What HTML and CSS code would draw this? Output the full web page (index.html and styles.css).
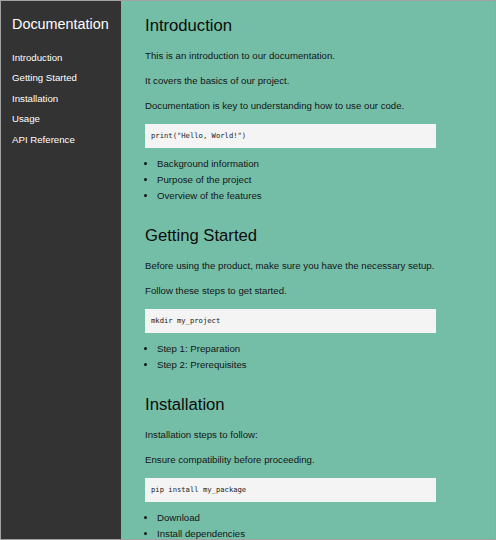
FILE: index.html
```html
<!DOCTYPE html>
<html lang="en">
<head>
<meta charset="utf-8">
<title>Documentation</title>
<link rel="stylesheet" href="styles.css">
</head>
<body>
<div class="frame">
  <aside class="sidebar">
    <h1 class="brand">Documentation</h1>
    <ul class="nav">
      <li><a href="#introduction">Introduction</a></li>
      <li><a href="#getting-started">Getting Started</a></li>
      <li><a href="#installation">Installation</a></li>
      <li><a href="#usage">Usage</a></li>
      <li><a href="#api">API Reference</a></li>
    </ul>
  </aside>
  <main class="content">
    <section class="section" id="introduction">
      <h2>Introduction</h2>
      <p>This is an introduction to our documentation.</p>
      <p>It covers the basics of our project.</p>
      <p>Documentation is key to understanding how to use our code.</p>
      <pre class="code">print("Hello, World!")</pre>
      <ul class="list">
        <li>Background information</li>
        <li>Purpose of the project</li>
        <li>Overview of the features</li>
      </ul>
    </section>
    <section class="section" id="getting-started">
      <h2>Getting Started</h2>
      <p>Before using the product, make sure you have the necessary setup.</p>
      <p>Follow these steps to get started.</p>
      <pre class="code">mkdir my_project</pre>
      <ul class="list">
        <li>Step 1: Preparation</li>
        <li>Step 2: Prerequisites</li>
      </ul>
    </section>
    <section class="section" id="installation">
      <h2>Installation</h2>
      <p>Installation steps to follow:</p>
      <p>Ensure compatibility before proceeding.</p>
      <pre class="code">pip install my_package</pre>
      <ul class="list">
        <li>Download</li>
        <li>Install dependencies</li>
      </ul>
    </section>
  </main>
</div>
</body>
</html>
```

FILE: styles.css
```css
* { box-sizing: border-box; }

html, body {
  margin: 0;
  padding: 0;
  height: 100%;
}

body {
  font-family: "Liberation Sans", Arial, sans-serif;
  overflow: hidden;
}

.frame {
  display: flex;
  height: 540px;
  border: 1px solid #a2a2a2;
  overflow: hidden;
}

.sidebar {
  width: 120px;
  flex: 0 0 120px;
  background: #333333;
  color: #ffffff;
  padding: 15px 0 0 11px;
}

.brand {
  margin: 0;
  font-size: 14.4px;
  line-height: 17px;
  font-weight: normal;
}

.nav {
  list-style: none;
  margin: 15px 0 0 0;
  padding: 0;
}

.nav li {
  font-size: 9.66px;
  line-height: 20.4px;
}

.nav a {
  color: #ffffff;
  text-decoration: none;
}

.content {
  flex: 1;
  background: #74bea8;
  color: #141414;
  padding: 15px 59px 0 24px;
}

.section h2 {
  margin: 22px 0 13px 0;
  font-size: 16.67px;
  line-height: 20px;
  font-weight: normal;
  color: #0c0c0c;
}

.section:first-child h2 {
  margin-top: 0;
}

.section p {
  margin: 12px 0;
  font-size: 9.66px;
  line-height: 13px;
}

.code {
  margin: 12px 0 0 0;
  height: 24px;
  padding: 0 6px;
  background: #f4f4f4;
  font-family: "DejaVu Sans Mono", monospace;
  font-size: 7.2px;
  line-height: 24px;
  color: #1a1a1a;
}

.list {
  margin: 8px 0 0 0;
  padding-left: 12px;
}

.list li {
  font-size: 9.66px;
  line-height: 16px;
}
```
